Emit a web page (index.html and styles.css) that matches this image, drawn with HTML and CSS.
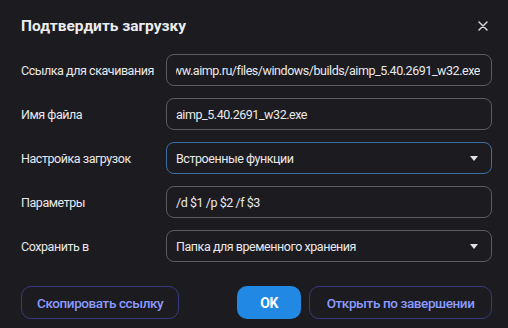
FILE: index.html
```html
<!DOCTYPE html>
<html>
	<head>
		<meta charset="UTF-8">
		<title>Подтвердить загрузку</title>
		<link rel="stylesheet" href="styles.css">
	</head>
	<body>
		<div class="dialog">
			<div class="head">
				<h1 class="title">Подтвердить загрузку</h1>
				<span class="close">
					<svg width="10" height="10" viewBox="0 0 10 10"><path d="M1 1L9 9M9 1L1 9" stroke="#d6d6d8" stroke-width="1.5" stroke-linecap="round"/></svg>
				</span>
			</div>
			<div class="form">
				<label class="lbl">Ссылка для скачивания</label>
				<div class="field"><span class="val end"><span>https://www.aimp.ru/files/windows/builds/aimp_5.40.2691_w32.exe</span></span></div>

				<label class="lbl">Имя файла</label>
				<div class="field"><span class="val">aimp_5.40.2691_w32.exe</span></div>

				<label class="lbl">Настройка загрузок</label>
				<div class="field focus"><span class="val">Встроенные функции</span><span class="arrow"></span></div>

				<label class="lbl">Параметры</label>
				<div class="field"><span class="val">/d $1 /p $2 /f $3</span></div>

				<label class="lbl">Сохранить в</label>
				<div class="field"><span class="val">Папка для временного хранения</span><span class="arrow"></span></div>
			</div>
			<div class="actions">
				<button class="btn outline">Скопировать ссылку</button>
				<div class="right">
					<button class="btn primary">OK</button>
					<button class="btn outline wide">Открыть по завершении</button>
				</div>
			</div>
		</div>
	</body>
</html>
```
FILE: styles.css
```css
* {
	margin: 0;
	padding: 0;
	box-sizing: border-box;
}

body {
	background-color: #1c1b20;
	color: #e9e9eb;
	font-family: Roboto, "Noto Sans", sans-serif;
	font-size: 12.5px;
	letter-spacing: -0.45px;
	width: 508px;
	height: 328px;
	overflow: hidden;
}

.dialog {
	padding: 15px 16px 0 21px;
}

.head {
	display: flex;
	justify-content: space-between;
	align-items: center;
	height: 22px;
}

.title {
	font-size: 15.5px;
	font-weight: 700;
	color: #ececee;
	letter-spacing: 0;
}

.close {
	display: flex;
	width: 10px;
	height: 10px;
	margin-right: 4px;
}

.form {
	display: grid;
	grid-template-columns: 145px 326px;
	row-gap: 12px;
	align-items: center;
	margin-top: 17px;
}

.lbl {
	white-space: nowrap;
}

.field {
	height: 32px;
	border: 1px solid #5b5b60;
	border-radius: 8px;
	display: flex;
	align-items: center;
	padding: 0 13px 0 9px;
	overflow: hidden;
}

.field.focus {
	border-color: #3d6fa6;
}

.val {
	flex: 1;
	white-space: nowrap;
	overflow: hidden;
}

.val.end {
	display: flex;
	justify-content: flex-end;
	margin-right: -2px;
}

.val.end span {
	flex: none;
}

.arrow {
	width: 0;
	height: 0;
	border-left: 4px solid transparent;
	border-right: 4px solid transparent;
	border-top: 5px solid #e0e0e2;
}

.actions {
	display: flex;
	justify-content: space-between;
	margin-top: 24px;
	width: 471px;
}

.right {
	display: flex;
	gap: 8px;
}

.btn {
	height: 33px;
	border-radius: 10px;
	font-family: Roboto, "Noto Sans", sans-serif;
	font-size: 13.5px;
	font-weight: 500;
	letter-spacing: -0.4px;
	background: transparent;
	padding: 0 15px;
}

.outline {
	border: 1px solid #363a7c;
	color: #8b9bff;
}

.wide {
	padding: 0 16.5px;
}

.primary {
	border: none;
	background-color: #2189e4;
	color: #ffffff;
	font-size: 14px;
	font-weight: 700;
	width: 64px;
}
```
